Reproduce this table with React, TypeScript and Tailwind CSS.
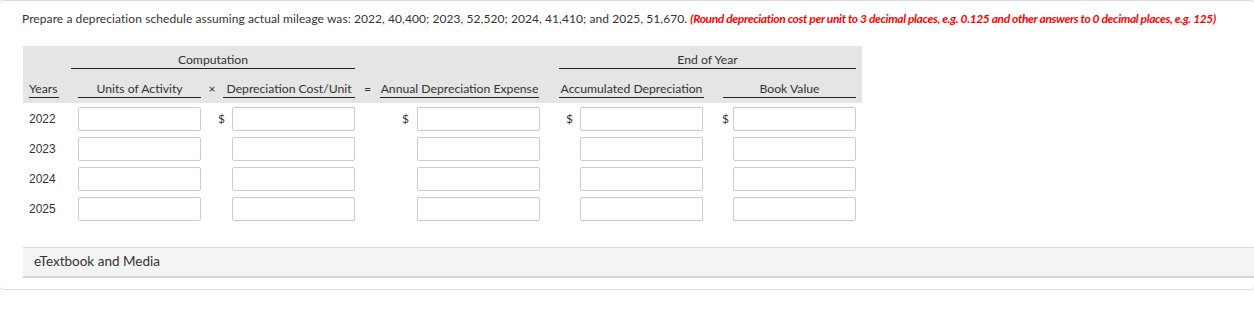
const years = ['2022', '2023', '2024', '2025'];

function Cell({ w }: { w: string }) {
  return <div className={`${w} h-[24px] shrink-0 border border-[#cccccc] rounded-[2px] bg-white`} />;
}

function Dollar({ w, pr, show }: { w: string; pr: string; show: boolean }) {
  return (
    <div className={`${w} ${pr} shrink-0 flex items-center justify-end text-[12px] text-[#333]`}>
      {show ? '$' : ''}
    </div>
  );
}

export default function App() {
  return (
    <div className="w-[1254px] h-[309px] overflow-hidden bg-white font-['Lato','Noto_Sans',sans-serif] text-[#333]">
      <div className="-mx-px border border-[#dddddd] rounded-[4px] pt-[9px] pb-[11px]">
        <p className="px-[22px] text-[12px] leading-[18px] whitespace-nowrap tracking-[0.08px]">
          Prepare a depreciation schedule assuming actual mileage was: 2022, 40,400; 2023, 52,520; 2024, 41,410; and
          2025, 51,670.{' '}
          <span className="italic font-bold text-[#ff0000] tracking-[-0.36px]">
            (Round depreciation cost per unit to 3 decimal places, e.g. 0.125 and other answers to 0 decimal places, e.g. 125)
          </span>
        </p>

        <div className="ml-[23px] mt-[18px] w-[839px]">
          <div className="bg-[#e5e5e5] pt-[6px] pb-[5px] text-[12.2px]">
            <div className="flex">
              <div className="ml-[48px] w-[284px] border-b border-[#222] leading-[16px] text-center">Computation</div>
              <div className="ml-[204px] w-[297px] border-b border-[#222] leading-[16px] text-center">End of Year</div>
            </div>
            <div className="flex mt-[12px] leading-[16px]">
              <div className="ml-[6px] w-[30px] border-b border-[#222]">Years</div>
              <div className="ml-[19px] w-[123px] border-b border-[#222] text-center">Units of Activity</div>
              <div className="w-[22px] text-center">×</div>
              <div className="w-[132px] border-b border-[#222] text-center">Depreciation Cost/Unit</div>
              <div className="w-[25px] text-center">=</div>
              <div className="w-[159px] border-b border-[#222] text-center whitespace-nowrap">Annual Depreciation Expense</div>
              <div className="ml-[20px] w-[145px] border-b border-[#222] text-center whitespace-nowrap">Accumulated Depreciation</div>
              <div className="ml-[19px] w-[133px] border-b border-[#222] text-center">Book Value</div>
            </div>
          </div>

          <div className="mt-[4px] flex flex-col gap-[6px]">
            {years.map((y, i) => (
              <div key={y} className="flex">
                <div className="ml-[6px] w-[49px] shrink-0 flex items-center text-[12px] font-['Liberation_Sans',Arial,sans-serif] text-[#333]">
                  {y}
                </div>
                <Cell w="w-[123px]" />
                <Dollar w="w-[31px]" pr="pr-[7px]" show={i === 0} />
                <Cell w="w-[123px]" />
                <Dollar w="w-[62px]" pr="pr-[8px]" show={i === 0} />
                <Cell w="w-[123px]" />
                <Dollar w="w-[40px]" pr="pr-[7px]" show={i === 0} />
                <Cell w="w-[123px]" />
                <Dollar w="w-[30px]" pr="pr-[4px]" show={i === 0} />
                <Cell w="w-[123px]" />
              </div>
            ))}
          </div>
        </div>

        <div className="ml-[23px] mt-[26px] h-[31px] bg-[#f4f4f4] border-t border-[#dddddd] border-b-2 border-b-[#d9d9d9] flex items-center pl-[11px] pb-[1px] text-[13.5px]">
          eTextbook and Media
        </div>
      </div>
    </div>
  );
}
